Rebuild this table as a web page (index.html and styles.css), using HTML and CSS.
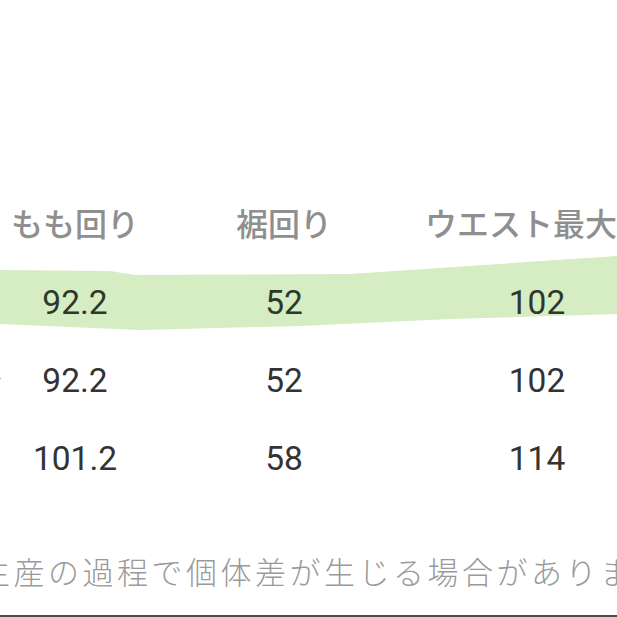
FILE: index.html
```html
<!DOCTYPE html>
<html lang="ja">
<head>
<meta charset="utf-8">
<link rel="stylesheet" href="styles.css">
</head>
<body>
<div class="page">
  <div class="table">
    <div class="row head">
      <div class="cell">もも回り</div>
      <div class="cell">裾回り</div>
      <div class="cell">ウエスト最大幅</div>
    </div>
    <div class="row hl">
      <svg class="marker" viewBox="0 0 617 78" preserveAspectRatio="none" aria-hidden="true">
        <path d="M0,6 L110,7 L135,11 L350,10 L617,-8 L617,50 L450,55 L300,62 L140,66 L0,60 Z" fill="#d6ecc2"/>
      </svg>
      <div class="cell num">92.2</div>
      <div class="cell num">52</div>
      <div class="cell num">102</div>
    </div>
    <div class="row">
      <span class="cut">-</span>
      <div class="cell num">92.2</div>
      <div class="cell num">52</div>
      <div class="cell num">102</div>
    </div>
    <div class="row">
      <div class="cell num">101.2</div>
      <div class="cell num">58</div>
      <div class="cell num">114</div>
    </div>
  </div>
  <p class="note">生産の過程で個体差が生じる場合があります。</p>
  <div class="rule"></div>
</div>
</body>
</html>
```

FILE: styles.css
```css
html, body {
  margin: 0;
  padding: 0;
  background: #ffffff;
}
body {
  width: 617px;
  height: 617px;
  overflow: hidden;
}
.page {
  width: 617px;
  height: 617px;
  padding-top: 180px;
  box-sizing: border-box;
  display: flex;
  flex-direction: column;
}
.table {
  display: flex;
  flex-direction: column;
}
.row {
  position: relative;
  display: grid;
  grid-template-columns: 150px 268px 238px;
  height: 78px;
  align-items: center;
}
.row.head {
  height: 84px;
}
.cell {
  position: relative;
  text-align: center;
  white-space: nowrap;
  z-index: 1;
}
.head .cell {
  font-family: "Noto Sans CJK JP", sans-serif;
  font-size: 32px;
  font-weight: 500;
  color: #8f8f8f;
  line-height: 40px;
}
.num {
  font-family: Roboto, "Noto Sans", sans-serif;
  font-size: 33.5px;
  color: #333333;
  line-height: 40px;
}
.hl .num {
  color: #2d382b;
}
.marker {
  position: absolute;
  left: 0;
  top: 0;
  width: 617px;
  height: 78px;
  overflow: visible;
  z-index: 0;
}
.cut {
  position: absolute;
  left: -3px;
  top: 28px;
  font-family: Roboto, sans-serif;
  font-size: 14px;
  color: #888;
}
.note {
  margin: 53px 0 0 -21px;
  font-family: "Noto Sans CJK JP", sans-serif;
  font-weight: 300;
  font-size: 31px;
  letter-spacing: 3.5px;
  line-height: 40px;
  color: #9a9a9a;
  white-space: nowrap;
}
.rule {
  margin-top: 24px;
  height: 2px;
  background: #4a4a4a;
  width: 100%;
}
```
